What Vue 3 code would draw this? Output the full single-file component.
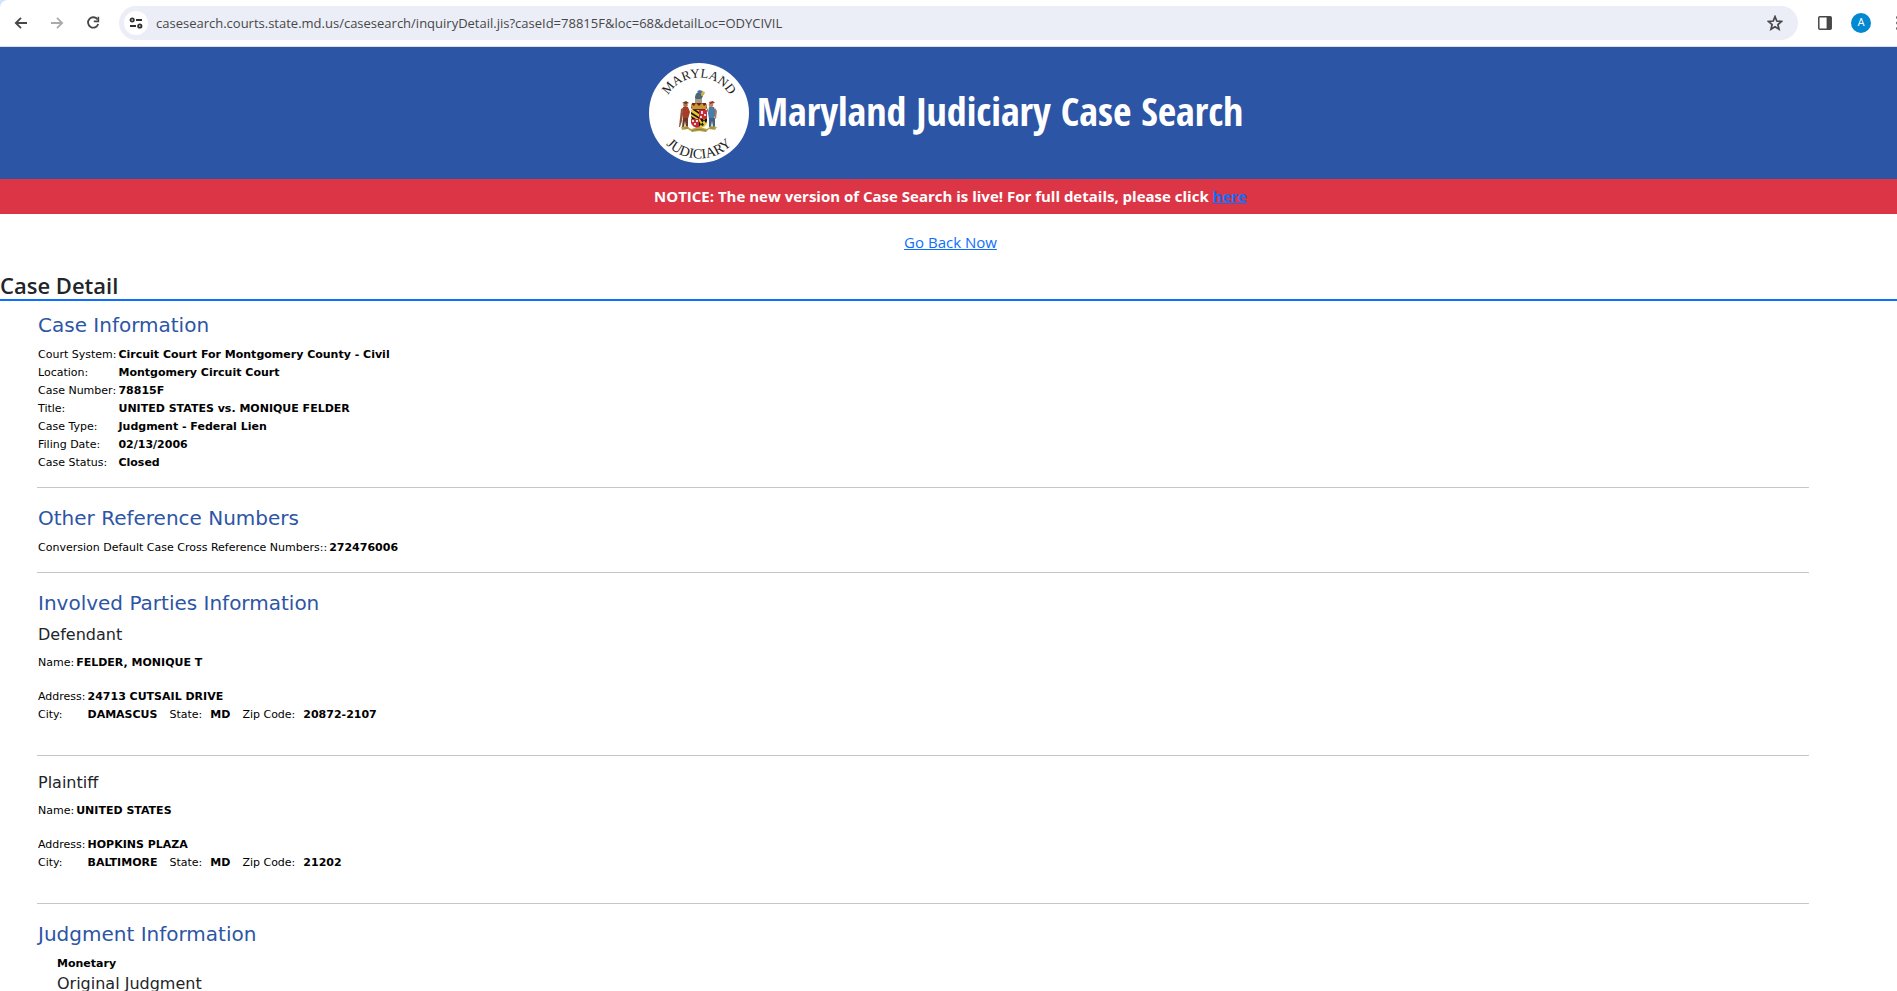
<script setup>
import { ref } from 'vue'

const address = ref('casesearch.courts.state.md.us/casesearch/inquiryDetail.jis?caseId=78815F&loc=68&detailLoc=ODYCIVIL')

const caseInfo = [
  ['Court System:', 'Circuit Court For Montgomery County - Civil'],
  ['Location:', 'Montgomery Circuit Court'],
  ['Case Number:', '78815F'],
  ['Title:', 'UNITED STATES vs. MONIQUE FELDER'],
  ['Case Type:', 'Judgment - Federal Lien'],
  ['Filing Date:', '02/13/2006'],
  ['Case Status:', 'Closed'],
]

const parties = [
  { role: 'Defendant', name: 'FELDER, MONIQUE T', street: '24713 CUTSAIL DRIVE', city: 'DAMASCUS', state: 'MD', zip: '20872-2107' },
  { role: 'Plaintiff', name: 'UNITED STATES', street: 'HOPKINS PLAZA', city: 'BALTIMORE', state: 'MD', zip: '21202' },
]
</script>

<template>
  <div class="window">
    <div class="chrome">
      <div class="toolbar">
        <div class="nav">
          <button type="button" aria-label="Back">
            <svg viewBox="0 0 16 16" width="16" height="16"><path d="M14 8H3M8 2.8 2.8 8 8 13.2" fill="none" stroke="#474747" stroke-width="1.8" /></svg>
          </button>
          <button type="button" aria-label="Forward" disabled>
            <svg viewBox="0 0 16 16" width="16" height="16"><path d="M2 8h11M8 2.8 13.2 8 8 13.2" fill="none" stroke="#ababab" stroke-width="1.8" /></svg>
          </button>
          <button type="button" aria-label="Reload">
            <svg viewBox="0 0 16 16" width="16" height="16">
              <path d="M12.6 4.6A5.2 5.2 0 1 0 13.2 9" fill="none" stroke="#474747" stroke-width="1.8" />
              <path d="M14.2 1.8v5.4H8.8V5.6h3.8V1.8z" fill="#474747" />
            </svg>
          </button>
        </div>
        <div class="omnibox">
          <button type="button" class="site" aria-label="View site information">
            <svg viewBox="0 0 14 12" width="14" height="12" fill="none" stroke="#303030" stroke-width="1.8">
              <circle cx="3.200" cy="3" r="1.700" /><path d="M7 3h6M1 9h6" /><circle cx="10.800" cy="9" r="1.700" />
            </svg>
          </button>
          <input v-model="address" type="text" aria-label="Address" spellcheck="false" />
          <button type="button" class="star" aria-label="Bookmark this tab">
            <svg viewBox="0 0 16 16" width="16" height="16"><path d="M8 1.6 9.8 6l4.7.4-3.6 3.1 1.1 4.7L8 11.7l-4 2.5 1.1-4.7L1.5 6.4 6.2 6z" fill="none" stroke="#474747" stroke-width="1.7" /></svg>
          </button>
        </div>
        <button type="button" class="panel" aria-label="Side panel">
          <svg viewBox="0 0 14 14" width="14" height="14"><rect x=".8" y=".8" width="12.4" height="12.4" rx="1" fill="none" stroke="#474747" stroke-width="1.5" /><path d="M8.6 1H13v12H8.6z" fill="#474747" /></svg>
        </button>
        <button type="button" class="avatar" aria-label="Profile">A</button>
        <button type="button" class="menu" aria-label="Menu">
          <svg viewBox="0 0 4 16" width="4" height="16" fill="#474747"><circle cx="2" cy="2.500" r="1.800" /><circle cx="2" cy="8" r="1.800" /><circle cx="2" cy="13.500" r="1.800" /></svg>
        </button>
      </div>
    </div>

    <div class="page">
      <header class="banner">
        <svg class="seal" viewBox="0 0 100 100" width="100" height="100" role="img" aria-label="Maryland Judiciary seal">
          <defs>
            <path id="seal-top" d="M14.5 50a35.5 35.5 0 0 1 71 0" />
            <path id="seal-bottom" d="M4.500 50a45.500 45.500 0 0 0 91 0" />
          </defs>
          <circle cx="50" cy="50" r="50" fill="#fff" />
          <text class="seal-text"><textPath href="#seal-top" startOffset="50%">MARYLAND</textPath></text>
          <text class="seal-text lower"><textPath href="#seal-bottom" startOffset="50%">JUDICIARY</textPath></text>
          <!-- crest and helmet -->
          <path d="M46 35c0-4 2-6 5-6l3 4-2 4h-5z" fill="#4f6570" />
          <path d="m48 29 2-2 4 1-2 3z" fill="#3f70b5" />
          <path d="m53 28 3 1-1 3-3 1z" fill="#d2b23c" />
          <path d="M46 36h7v5h-7z" fill="#a5a089" />
          <path d="M43 40h14l1 5-3 3H45l-3-3z" fill="#7b2021" />
          <path d="m42 41 3 2 2-3 3 3 3-3 2 3 3-2-1 5H43z" fill="#c39b33" />
          <!-- quartered shield -->
          <path d="M42 47h8v9h-8z" fill="#e6c72e" />
          <path d="m42 49 8 5v2l-8-5zM44 47l6 4v-2l-3-2zM42 53l5 3h-4z" fill="#151515" />
          <path d="M50 47h8v9h-8z" fill="#c62b3b" />
          <path d="M52 48h2v3h-2zM55 51h2v2h-2zM51 53h2v2h-2z" fill="#f3d7d8" />
          <path d="M42 56h8v9c-4 0-7-2-8-5z" fill="#c62b3b" />
          <path d="M43 57h2v2h-2zM47 57h2v2h-2zM45 60h2v2h-2z" fill="#f3d7d8" />
          <path d="M50 56h8v4c-1 3-4 5-8 5z" fill="#e6c72e" />
          <path d="m50 58 3 5 2-1-4-6h3l3 4 1-2v-2h-2l-6 8z" fill="#151515" />
          <!-- supporters -->
          <circle cx="36.500" cy="42" r="2.300" fill="#b26b42" />
          <path d="m33 40 4-2 3 2-3 1z" fill="#623c29" />
          <path d="m34 44 5 0 2 5-2 7h-5l-1-5z" fill="#a63b29" />
          <path d="m34 55 5 0 0 9h-2l-1-6-1 6h-2z" fill="#6b3826" />
          <path d="m32 46 2-1-1 13-2 6h-1z" fill="#8c523e" />
          <circle cx="62" cy="42" r="2.300" fill="#c98056" />
          <path d="m60 39 4-1 2 2-5 1z" fill="#933c35" />
          <path d="m60 44 5 0 2 5-2 7h-5l-1-6z" fill="#467eaa" />
          <path d="m60 55 6 0 0 9h-2l-1-6-1 6h-2z" fill="#416485" />
          <path d="m66 45 2 3-1 8-1-1zM59 45l-2 3 2 1z" fill="#bb7355" />
          <!-- motto ribbon -->
          <path d="m32 64 6-1 4 3 8-2 8 2 4-3 6 1-2 3-6-1-3 3-7-1-7 1-4-3-6 1z" fill="#b7a44b" />
          <path d="M43 68c4-2 10-2 14 0M35 65l4 0M61 65l4 0" fill="none" stroke="#7d6d33" stroke-width=".7" />
        </svg>
        <h1>Maryland Judiciary Case Search</h1>
      </header>
      <div class="notice">NOTICE: The new version of Case Search is live! For full details, please click <a href="#">here</a></div>
      <div class="back"><a href="#">Go Back Now</a></div>
      <h2 class="title">Case Detail</h2>

      <main class="detail">
        <section>
          <h3>Case Information</h3>
          <table>
            <tbody>
              <tr v-for="row in caseInfo" :key="row[0]"><th scope="row">{{ row[0] }}</th><td>{{ row[1] }}</td></tr>
            </tbody>
          </table>
        </section>
        <section>
          <h3>Other Reference Numbers</h3>
          <table>
            <tbody>
              <tr><th scope="row">Conversion Default Case Cross Reference Numbers::</th><td>272476006</td></tr>
            </tbody>
          </table>
        </section>
        <section v-for="(p, i) in parties" :key="p.role" :class="['party', { next: i > 0 }]">
          <h3 v-if="i === 0">Involved Parties Information</h3>
          <h4>{{ p.role }}</h4>
          <table>
            <tbody><tr><th scope="row">Name:</th><td>{{ p.name }}</td></tr></tbody>
          </table>
          <table class="address">
            <tbody>
              <tr><th scope="row">Address:</th><td>{{ p.street }}</td></tr>
              <tr>
                <th scope="row">City:</th>
                <td><span>{{ p.city }}</span><span class="key">State:</span><span>{{ p.state }}</span><span class="key">Zip Code:</span><span>{{ p.zip }}</span></td>
              </tr>
            </tbody>
          </table>
        </section>
        <section>
          <h3>Judgment Information</h3>
          <div class="judgment">
            <strong>Monetary</strong>
            <h4>Original Judgment</h4>
          </div>
        </section>
      </main>
    </div>
  </div>
</template>

<style>
body {
  margin: 0;
  background: #fff;
}
</style>

<style scoped>
.window {
  display: flex;
  flex-direction: column;
  height: 100vh;
  overflow: hidden;
  font-family: "Open Sans", "Noto Sans", sans-serif;
  color: #212529;
}
.chrome {
  flex: none;
  background: #d3e3fd;
  border-bottom: 1px solid #dedfe0;
}
.toolbar {
  display: flex;
  align-items: center;
  height: 46px;
  padding-left: 9px;
  overflow: hidden;
  background: #fff;
  border-top-left-radius: 8px;
}
button {
  display: flex;
  flex: none;
  align-items: center;
  justify-content: center;
  width: 24px;
  height: 24px;
  padding: 0;
  border: 0;
  background: none;
}
.nav {
  display: flex;
  gap: 12px;
  margin-right: 14px;
}
.omnibox {
  display: flex;
  flex: 1;
  align-items: center;
  height: 34px;
  padding: 0 11px 0 5px;
  border-radius: 17px;
  background: #ebeef7;
}
.omnibox .site {
  border-radius: 50%;
  background: #fff;
}
.omnibox input {
  flex: 1;
  min-width: 0;
  height: 24px;
  padding: 0 8px;
  border: 0;
  outline: 0;
  background: none;
  color: #474747;
  font: 13px/24px "Open Sans", "Noto Sans", sans-serif;
}
.panel {
  margin: 0 14px 0 15px;
}
.avatar {
  width: 20px;
  height: 20px;
  border-radius: 50%;
  background: #0288d1;
  color: #fff;
  font: 11px/20px Roboto, sans-serif;
}
.menu {
  margin: 0 -13px 0 15px;
}
.page {
  flex: 1;
  min-height: 0;
  overflow: hidden;
}
.banner {
  display: flex;
  align-items: center;
  justify-content: center;
  gap: 8px;
  height: 132px;
  padding-right: 5px;
  background: #2d55a5;
}
.seal {
  flex: none;
}
.seal-text {
  font: 13px "Liberation Serif", serif;
  text-anchor: middle;
  fill: #222;
}
.seal-text.lower {
  font-size: 14px;
}
h1, h2, h3, h4 {
  margin: 0;
}
h1 {
  padding-bottom: 4px;
  color: #fff;
  font: 800 40px/56px "Open Sans Condensed", "Roboto Condensed", "Liberation Sans Narrow", sans-serif;
  white-space: nowrap;
}
.notice {
  padding-left: 4px;
  background: #dc3545;
  color: #fff;
  font-size: 15px;
  font-weight: 700;
  line-height: 35px;
  text-align: center;
}
a {
  color: #0d6efd;
}
.back {
  padding: 16px 0 16px 4px;
  font-size: 15px;
  line-height: 24px;
  text-align: center;
}
.title {
  padding-top: 1px;
  border-bottom: 2px solid #0d6efd;
  font-size: 22px;
  font-weight: 600;
  line-height: 28px;
}
.detail {
  margin: 12px 88px 0 37px;
  font-family: "DejaVu Sans", Verdana, sans-serif;
}
section {
  padding-bottom: 15px;
}
section + section {
  padding-top: 18px;
  border-top: 1px solid #c6c6c6;
}
section.party {
  padding-bottom: 31px;
}
section.next {
  padding-top: 16px;
}
h3 {
  margin-bottom: 9px;
  padding-left: 1px;
  color: #2d55a5;
  font-size: 20px;
  font-weight: 400;
  line-height: 24px;
}
h4 {
  padding-left: 1px;
  font-size: 16px;
  font-weight: 400;
  line-height: 22px;
}
table {
  border-collapse: collapse;
  color: #000;
  font-size: 11px;
  line-height: 18px;
}
th {
  padding: 0 2px 0 1px;
  font-weight: 400;
  text-align: left;
}
td {
  padding: 0;
  font-weight: 700;
}
.party table {
  margin-top: 8px;
}
.party .address {
  margin-top: 16px;
}
.key {
  margin: 0 8px 0 12px;
  font-weight: 400;
}
.judgment {
  padding-left: 19px;
}
.judgment strong {
  display: block;
  padding-left: 1px;
  color: #000;
  font-size: 11px;
  line-height: 18px;
}
</style>
